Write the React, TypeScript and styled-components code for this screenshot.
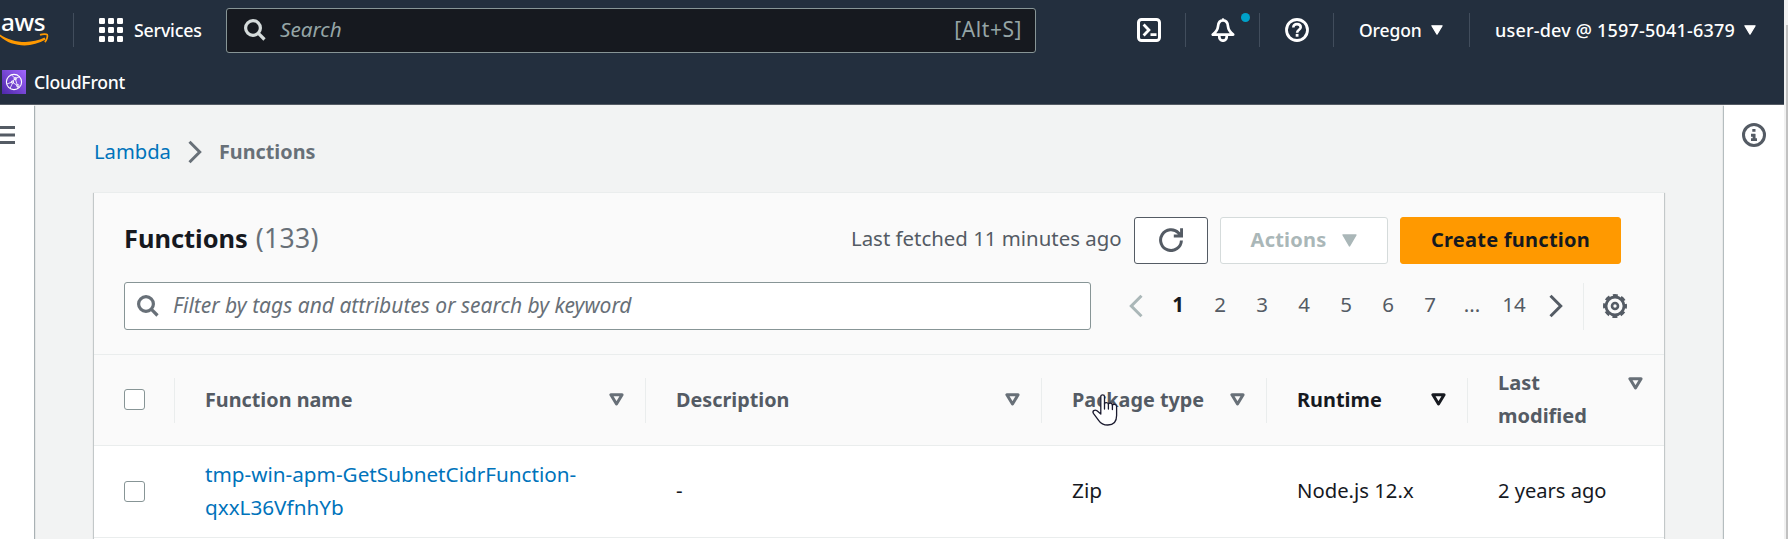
import React from 'react';
import styled, { createGlobalStyle } from 'styled-components';

const GlobalStyle = createGlobalStyle`
  * { box-sizing: border-box; }
  body {
    margin: 0;
    overflow: hidden;
    background: #f2f3f3;
    font-family: 'Noto Sans', 'Open Sans', sans-serif;
    font-size: 20.5px;
    line-height: 33px;
    color: #16191f;
  }
  svg { display: block; flex: none; }
`;

const Page = styled.div`
  display: flex;
  width: 1788px;
  height: 539px;
  overflow: hidden;
`;

const Main = styled.div`
  display: flex;
  flex-direction: column;
  width: 1784px;
  flex: none;
`;

const Scrollbar = styled.div`
  flex: 1;
  background: #f1f1f1;
  padding: 25px 0 0 2px;
`;

const ScrollThumb = styled.div`
  height: 100%;
  background: #c1c1c1;
`;

const Text = styled.span<{ $size?: number; $weight?: number; $track?: number; $color?: string; $italic?: boolean }>`
  display: inline-block;
  white-space: nowrap;
  font-size: ${p => p.$size ?? 20.5}px;
  font-weight: ${p => p.$weight ?? 400};
  font-style: ${p => (p.$italic ? 'italic' : 'normal')};
  letter-spacing: ${p => p.$track ?? 0}px;
  color: ${p => p.$color ?? 'inherit'};
`;

/* ---------- top navigation ---------- */

const Header = styled.header`
  height: 105px;
  flex: none;
  background: #232f3e;
  border-bottom: 1px solid #545b64;
  color: #fff;
`;

const NavRow = styled.div`
  display: flex;
  align-items: center;
  height: 60px;
`;

const Logo = styled.div`
  width: 73px;
  height: 60px;
  padding: 9px 0 0 1px;
  line-height: 26px;
`;

const Smile = styled.svg`
  margin: -3px 0 0 -1px;
`;

const Divider = styled.i`
  width: 1px;
  height: 34px;
  background: #414d5c;
`;

const ServicesButton = styled.div`
  display: flex;
  align-items: center;
  width: 152px;
  padding-left: 25px;
  gap: 11px;
`;

const SearchBox = styled.div`
  display: flex;
  align-items: center;
  width: 810px;
  height: 45px;
  padding: 0 13px 1px 17px;
  border: 1px solid #879596;
  border-radius: 3px;
  background: #16191f;
  color: #95a5a6;

  & > svg { margin-right: 14px; }
  & > :last-child { margin-left: auto; }
`;

const NavIcon = styled.div<{ $width?: number; $pad?: number }>`
  position: relative;
  display: flex;
  width: ${p => p.$width ?? 73}px;
  padding-left: ${p => p.$pad ?? 25}px;
`;

const Badge = styled.i`
  position: absolute;
  left: 55px;
  top: -5px;
  width: 9px;
  height: 9px;
  border-radius: 50%;
  background: #00a1c9;
`;

const NavMenu = styled.div<{ $width: number }>`
  display: flex;
  align-items: center;
  justify-content: space-between;
  width: ${p => p.$width}px;
  margin: 0 26px 0 25px;
`;

const Favorites = styled.div`
  display: flex;
  align-items: center;
  gap: 8px;
  height: 44px;
  padding-left: 2px;
`;

/* ---------- body ---------- */

const Body = styled.div`
  display: flex;
  flex: 1;
  min-height: 0;
`;

const LeftRail = styled.aside`
  width: 34px;
  padding-top: 21px;
  background: #fff;
  box-shadow: 1px 1px 1px 0 rgba(0, 28, 36, 0.3);
`;

const RightRail = styled.aside`
  width: 60px;
  padding: 18px 0 0 18px;
  background: #fff;
  box-shadow: -1px 1px 1px 0 rgba(0, 28, 36, 0.25);
`;

const Content = styled.main`
  flex: 1;
  padding: 0 60px;
`;

const Breadcrumbs = styled.nav`
  display: flex;
  align-items: center;
  height: 87px;
  padding-top: 5px;
`;

const Crumb = styled.div<{ $width?: number }>`
  width: ${p => (p.$width ? `${p.$width}px` : 'auto')};

  & > svg { margin-top: 2px; }
`;

const Card = styled.section`
  height: 420px;
  border-top: 1px solid #eaeded;
  background: #fff;
  box-shadow: 0 1px 1px 0 rgba(0, 28, 36, 0.3), 1px 1px 1px 0 rgba(0, 28, 36, 0.15), -1px 1px 1px 0 rgba(0, 28, 36, 0.15);
`;

const CardHead = styled.div`
  height: 162px;
  padding: 24px 0 0 30px;
  border-bottom: 1px solid #eaeded;
  background: #fafafa;
`;

const TitleRow = styled.div`
  display: flex;
  align-items: center;
  height: 47px;
`;

const Title = styled.h2`
  display: flex;
  gap: 8px;
  width: 727px;
  margin: -5px 0 0;
  font-size: inherit;
  font-weight: inherit;
`;

const Fetched = styled.div`
  width: 283px;
  margin-top: -5px;
`;

const Button = styled.button<{ $width: number; $tone: 'normal' | 'disabled' | 'primary' }>`
  display: flex;
  align-items: center;
  justify-content: center;
  width: ${p => p.$width}px;
  height: 47px;
  margin: 0 12px 0 0;
  padding: 0 0 1px;
  border: 1px solid ${p => ({ normal: '#545b64', disabled: '#d5dbdb', primary: '#ff9900' })[p.$tone]};
  border-radius: 3px;
  background: ${p => (p.$tone === 'primary' ? '#ff9900' : '#fff')};
  color: ${p => (p.$tone === 'disabled' ? '#aab7b8' : '#16191f')};
  font: inherit;

  & > span { margin-top: -2px; }
  & > span + svg { margin: 1px 0 0 16px; }
`;

const FilterRow = styled.div`
  display: flex;
  align-items: center;
  margin-top: 18px;
`;

const FilterBox = styled.div`
  display: flex;
  align-items: center;
  gap: 14px;
  width: 967px;
  height: 48px;
  padding: 0 0 1px 12px;
  border: 1px solid #879596;
  border-radius: 3px;
  background: #fff;
`;

const Pagination = styled.div`
  display: flex;
  margin-left: 24px;
  width: 468px;
`;

const PageItem = styled.div<{ $current?: boolean; $icon?: boolean }>`
  display: flex;
  align-items: center;
  justify-content: center;
  width: 42px;
  height: 33px;
  margin-top: ${p => (p.$icon ? 0 : -2)}px;
  font-weight: ${p => (p.$current ? 700 : 400)};
  color: ${p => (p.$current ? '#16191f' : '#545b64')};
  font-size: 20.5px;
`;

const Preferences = styled.div`
  display: flex;
  align-items: center;
  height: 47px;
  padding-left: 19px;
  border-left: 1px solid #eaeded;
`;

/* ---------- table ---------- */

const Row = styled.div<{ $head?: boolean }>`
  display: grid;
  grid-template-columns: 80px 471px 396px 225px 201px 197px;
  align-items: center;
  height: ${p => (p.$head ? 91 : 92)}px;
  border-bottom: 1px solid #eaeded;
  background: ${p => (p.$head ? '#fafafa' : '#fff')};
`;

const HeadCell = styled.div<{ $active?: boolean; $double?: boolean }>`
  position: relative;
  display: flex;
  align-items: ${p => (p.$double ? 'flex-start' : 'center')};
  justify-content: space-between;
  height: ${p => (p.$double ? 66 : 45)}px;
  padding: 0 21px 1px 31px;
  background: linear-gradient(#eaeded, #eaeded) left center / 1px 45px no-repeat;
  color: ${p => (p.$active ? '#16191f' : '#545b64')};

  & > span { margin-top: ${p => (p.$double ? -1 : 0)}px; }
  & > svg { margin-top: ${p => (p.$double ? 10 : 0)}px; }
`;

const Cell = styled.div<{ $lift?: boolean }>`
  padding: 0 0 ${p => (p.$lift ? 3 : 1)}px 31px;
`;

const Check = styled.i`
  display: block;
  width: 21px;
  height: 21px;
  margin: -1px 0 0 30px;
  border: 1.5px solid #879596;
  border-radius: 3px;
  background: #fff;
`;

const Cursor = styled.svg`
  position: absolute;
  left: 51px;
  top: 16px;
`;

/* ---------- icons ---------- */

const SearchIcon = ({ color }: { color: string }) => (
  <svg width="22" height="22" viewBox="0 0 22 22" fill="none" stroke={color} strokeWidth="3.2">
    <circle cx="9" cy="9" r="7.4" />
    <path d="M14.2 14.2L20.5 20.5" />
  </svg>
);

const Caret = ({ size, height, color }: { size: number; height: number; color: string }) => (
  <svg width={size} height={height} viewBox="0 0 14 12" preserveAspectRatio="none">
    <path d="M1 .9h12L7 11z" fill={color} stroke={color} strokeWidth="1.4" strokeLinejoin="round" />
  </svg>
);

const SortIcon = ({ color }: { color: string }) => (
  <svg width="15" height="13" viewBox="0 0 15 13">
    <path d="M1.9 1.8h11.2L7.5 11z" fill="none" stroke={color} strokeWidth="3" strokeLinejoin="round" />
  </svg>
);

const Chevron = ({ color, left }: { color: string; left?: boolean }) => (
  <svg width="14" height="24" viewBox="0 0 14 24" fill="none" stroke={color} strokeWidth="3">
    <path d={left ? 'M12.5 1.8L2.3 12l10.2 10.2' : 'M1.5 1.8L11.7 12 1.5 22.2'} />
  </svg>
);

const AppGrid = () => (
  <svg width="24" height="24" fill="#fff">
    {[0, 9, 18].map(y => [0, 9, 18].map(x => <rect key={`${x}-${y}`} x={x} y={y} width="6" height="6" rx="1.2" />))}
  </svg>
);

const ShellIcon = () => (
  <svg width="24" height="24" fill="none" stroke="#fff" strokeWidth="3">
    <rect x="1.5" y="1.5" width="21" height="21" rx="3" />
    <path d="M6.6 6.5l5.3 5.5-5.3 5.5M13.5 16.6h6" strokeWidth="2.8" />
  </svg>
);

const BellIcon = () => (
  <svg width="24" height="24" fill="none" stroke="#fff" strokeWidth="2.7" strokeLinejoin="round" strokeLinecap="round">
    <path d="M12 2.4C8.6 2.4 7.3 5 7 8.3 6.7 12 4.7 14.3 1.8 16.6h20.4C19.3 14.3 17.3 12 17 8.3 16.7 5 15.4 2.4 12 2.4zM12 1.5v1" />
    <path d="M8.3 17.5v1.5a3.7 3.7 0 0 0 7.4 0v-1.5" />
  </svg>
);

const HelpIcon = () => (
  <svg width="24" height="24" fill="none" stroke="#fff" strokeWidth="2.8">
    <circle cx="12" cy="12" r="10.5" />
    <path d="M8.3 9.6C8.3 7.5 9.8 6.1 12 6.1s3.7 1.3 3.7 3.2c0 2.4-3.6 2.7-3.6 5.5" strokeWidth="2.6" />
    <path d="M10.7 17.3h2.8" strokeWidth="2.8" />
  </svg>
);

const InfoIcon = () => (
  <svg width="24" height="24" fill="none" stroke="#545b64" strokeWidth="3">
    <circle cx="12" cy="12" r="10.5" />
    <path d="M10.3 7.4h3.2M9 12.3h4.3M12.1 11v5.2M9 16.6h6" strokeWidth="2.9" />
  </svg>
);

const RefreshIcon = () => (
  <svg width="24" height="24" fill="none" stroke="#545b64" strokeWidth="3">
    <path d="M22.4 12.5A10.4 10.4 0 1 1 19.6 5L22 8M22.6.3v7.6h-7.8" />
  </svg>
);

const GearIcon = () => (
  <svg width="24" height="24" fill="none" stroke="#545b64">
    <circle cx="12" cy="12" r="9" strokeWidth="2.8" />
    <circle cx="12" cy="12" r="10.8" strokeWidth="2.4" strokeDasharray="5 3.482" strokeDashoffset="2.5" />
    <circle cx="12" cy="12" r="3" strokeWidth="2.6" />
  </svg>
);

const CloudFrontIcon = () => (
  <svg width="24" height="24" fill="none" stroke="#fff">
    <defs>
      <linearGradient id="cf" x1="0" y1="1" x2="1" y2="0">
        <stop offset="0" stopColor="#4d27a8" />
        <stop offset="1" stopColor="#a166ff" />
      </linearGradient>
    </defs>
    <rect width="24" height="24" fill="url(#cf)" stroke="none" />
    <circle cx="12" cy="12" r="7.6" strokeWidth="1.1" />
    <path d="M5 14l5.5-2.2 2.5-3.4 5-1.7M9.5 5l3.8 3.6 2 6.6M10.8 12.5l-2.6 5.6M10.8 12.5l4.8 3.2.6 2.4" strokeWidth=".8" />
    <circle cx="10.5" cy="12" r="1.2" strokeWidth=".9" />
    <circle cx="13.3" cy="8.7" r="1.2" strokeWidth=".9" />
    <circle cx="15.8" cy="15.7" r="1.2" strokeWidth=".9" />
  </svg>
);

const MenuIcon = () => (
  <svg width="15" height="18" fill="#545b64">
    <rect width="15" height="3" />
    <rect y="7.5" width="15" height="3" />
    <rect y="15" width="15" height="3" />
  </svg>
);

const HandCursor = () => (
  <Cursor width="27" height="33" viewBox="0 0 27 33" fill="#fff" stroke="#1b1b2f" strokeWidth="1.3" strokeLinejoin="round" strokeLinecap="round">
    <path d="M8.8 20V2.6C8.8.2 12.5.2 12.5 2.6V10C12.5 8 16.4 8 16.4 10.3 16.6 8.6 20.4 8.8 20.4 11.2 20.8 9.8 24.6 10.2 24.6 12.6V21.5C24.6 27.5 21.3 31 15.8 31 11.3 31 8.6 29.3 6.6 26.3L1.6 19.6C-.2 17 2.7 15.2 5 16.8z" />
    <path d="M12.5 9.8V15M16.4 10.3V15M20.4 11.2V15.5" />
  </Cursor>
);

const columns = [
  { label: 'Function name', size: 19.8 },
  { label: 'Description', size: 19.8 },
  { label: 'Package type', size: 19.8 },
  { label: 'Runtime', size: 19.9, active: true },
];

const pages = ['1', '2', '3', '4', '5', '6', '7', '...', '14'];

export default function App() {
  return (
    <>
      <GlobalStyle />
      <Page>
        <Main>
          <Header>
            <NavRow>
              <Logo>
                <Text $size={24.3} $weight={500} $track={-0.4}>aws</Text>
                <Smile width="49" height="13" viewBox="0 0 49 13">
                  <path d="M0 1.4C12 9.6 30 11.8 44.5 4.6l1.2 2C31 15.4 11.5 14 0 3.5z" fill="#f90" />
                  <path d="M40 1.9C43 .7 46.5.9 47.2 1.6c.7 1.2-.2 5.400-2.400 7.400" fill="none" stroke="#f90" strokeWidth="1.7" />
                </Smile>
              </Logo>
              <Divider />
              <ServicesButton>
                <AppGrid />
                <Text $size={17.8} $weight={500} $track={-0.2}>Services</Text>
              </ServicesButton>
              <SearchBox>
                <SearchIcon color="#d5dbdb" />
                <Text $italic $size={20.7}>Search</Text>
                <Text $size={21} $track={0.55}>[Alt+S]</Text>
              </SearchBox>
              <NavIcon $width={149} $pad={101}><ShellIcon /></NavIcon>
              <Divider />
              <NavIcon>
                <BellIcon />
                <Badge />
              </NavIcon>
              <Divider />
              <NavIcon><HelpIcon /></NavIcon>
              <Divider />
              <NavMenu $width={84}>
                <Text $size={17.5} $weight={500} $track={-0.1}>Oregon</Text>
                <Caret size={12} height={10} color="#fff" />
              </NavMenu>
              <Divider />
              <NavMenu $width={261}>
                <Text $size={18} $weight={500} $track={0.2}>user-dev @ 1597-5041-6379</Text>
                <Caret size={12} height={10} color="#fff" />
              </NavMenu>
            </NavRow>
            <Favorites>
              <CloudFrontIcon />
              <Text $size={17.6} $weight={500} $track={-0.25}>CloudFront</Text>
            </Favorites>
          </Header>

          <Body>
            <LeftRail><MenuIcon /></LeftRail>
            <Content>
              <Breadcrumbs>
                <Crumb $width={94}><Text $size={20.2} $color="#0073bb">Lambda</Text></Crumb>
                <Crumb $width={31}><Chevron color="#687078" /></Crumb>
                <Crumb><Text $size={19.8} $weight={700} $color="#687078">Functions</Text></Crumb>
              </Breadcrumbs>
              <Card>
                <CardHead>
                  <TitleRow>
                    <Title>
                      <Text $size={25.4} $weight={700}>Functions</Text>
                      <Text $size={26.5} $track={0.3} $color="#687078">(133)</Text>
                    </Title>
                    <Fetched><Text $size={20.4} $color="#545b64">Last fetched 11 minutes ago</Text></Fetched>
                    <Button $width={74} $tone="normal"><RefreshIcon /></Button>
                    <Button $width={168} $tone="disabled">
                      <Text $size={20} $weight={700} $track={0.2}>Actions</Text>
                      <Caret size={15} height={13} color="#aab7b8" />
                    </Button>
                    <Button $width={221} $tone="primary">
                      <Text $size={20} $weight={700} $track={0.25}>Create function</Text>
                    </Button>
                  </TitleRow>
                  <FilterRow>
                    <FilterBox>
                      <SearchIcon color="#687078" />
                      <Text $italic $size={21} $color="#687078">Filter by tags and attributes or search by keyword</Text>
                    </FilterBox>
                    <Pagination>
                      <PageItem $icon><Chevron left color="#aab7b8" /></PageItem>
                      {pages.map(p => (
                        <PageItem key={p} $current={p === '1'}>{p}</PageItem>
                      ))}
                      <PageItem $icon><Chevron color="#545b64" /></PageItem>
                    </Pagination>
                    <Preferences><GearIcon /></Preferences>
                  </FilterRow>
                </CardHead>
                <Row $head>
                  <Check />
                  {columns.map(c => (
                    <HeadCell key={c.label} $active={c.active}>
                      <Text $size={c.size} $weight={700}>{c.label}</Text>
                      <SortIcon color={c.active ? '#16191f' : '#687078'} />
                      {c.label === 'Package type' && <HandCursor />}
                    </HeadCell>
                  ))}
                  <HeadCell $double>
                    <Text $size={20} $weight={700}>Last<br />modified</Text>
                    <SortIcon color="#687078" />
                  </HeadCell>
                </Row>
                <Row>
                  <Check />
                  <Cell><Text $size={20.7} $color="#0073bb">tmp-win-apm-GetSubnetCidrFunction-<br />qxxL36VfnhYb</Text></Cell>
                  <Cell $lift><Text>-</Text></Cell>
                  <Cell $lift><Text $size={20.8}>Zip</Text></Cell>
                  <Cell $lift><Text $size={20.3}>Node.js 12.x</Text></Cell>
                  <Cell $lift><Text $size={20.1}>2 years ago</Text></Cell>
                </Row>
              </Card>
            </Content>
            <RightRail><InfoIcon /></RightRail>
          </Body>
        </Main>
        <Scrollbar><ScrollThumb /></Scrollbar>
      </Page>
    </>
  );
}
